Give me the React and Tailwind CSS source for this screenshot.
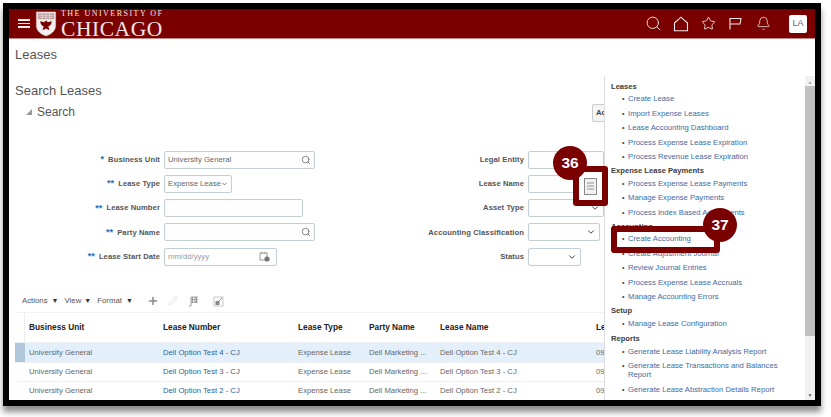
import { Search, Star, Bell, ChevronDown, Plus, Pencil } from "lucide-react";

const sans = "font-['Liberation_Sans',Arial,sans-serif]";

const Shield = () => (
  <svg width="22" height="26" viewBox="0 0 22 27" className="shrink-0">
    <path d="M1 1h20v14c0 6-5 9-10 11C6 24 1 21 1 15z" fill="#f4eeee" stroke="#d9c4c4" strokeWidth="0.6" />
    <rect x="2.5" y="2.5" width="17" height="6" fill="#b99a9a" />
    <path d="M3 4.5h16M3 6.5h16M7 2.5v6M11 2.5v6M15 2.5v6" stroke="#f4eeee" strokeWidth="0.6" />
    <path d="M11 10c-1 0-1.6.8-1.6 1.7L5 10.6c.3 3 1.6 4.8 3.6 5.4l-1.2 4 3.6-1.8 3.6 1.8-1.2-4c2-.6 3.3-2.4 3.6-5.4l-4.4 1.1C12.6 10.8 12 10 11 10z" fill="#7a0000" />
  </svg>
);

const HomeIcon = () => (
  <svg width="16" height="16" viewBox="0 0 16 16" fill="none" stroke="#f3e9e9" strokeWidth="1.1">
    <path d="M1.5 7 8 1.2 14.5 7v7.8h-13z" />
  </svg>
);

const FlagIcon = () => (
  <svg width="15" height="15" viewBox="0 0 15 15" fill="none" stroke="#f3e9e9" strokeWidth="1.1">
    <path d="M2 13.5V2.5h11L12 8H2" />
  </svg>
);

const Header = () => (
  <div className="h-[30px] shrink-0 bg-[#7a0000] border-b border-[#c98a8a] flex items-center pl-[9px] pr-[8px]">
    <div className="flex flex-col gap-[2.4px] w-[12px] mr-[5px]">
      <div className="h-[1.2px] bg-[#eee]" />
      <div className="h-[1.2px] bg-[#eee]" />
      <div className="h-[1.2px] bg-[#eee]" />
    </div>
    <Shield />
    <div className="ml-[4px] flex flex-col text-[#f0e6e6] font-['Liberation_Serif',serif] leading-none">
      <span className="text-[8px] tracking-[1.47px] h-[9px]">THE UNIVERSITY OF</span>
      <span className="text-[21.5px] tracking-[0.55px] h-[18px]">CHICAGO</span>
    </div>
    <div className="ml-auto flex items-center text-[#f3e9e9]">
      <Search size={17} strokeWidth={1.3} className="mr-[11px]" />
      <div className="mr-[12px]"><HomeIcon /></div>
      <Star size={15} strokeWidth={1.4} className="mr-[12px]" />
      <div className="mr-[13px]"><FlagIcon /></div>
      <Bell size={15} strokeWidth={1.2} className="mr-[18px]" />
      <div className={`w-[18px] h-[18px] rounded-[2px] bg-white text-[#666] text-[9px] flex items-center justify-center ${sans}`}>LA</div>
    </div>
  </div>
);

const Label = ({ req, children }) => (
  <div className="flex items-center justify-end text-[7.6px] font-bold text-[#555] tracking-[0.1px]">
    {req && <span className="text-[#2a6cb0] mr-[4px] text-[9px] leading-none">{req}</span>}
    {children}
  </div>
);

const Field = ({ w, children }) => (
  <div className={`h-[18px] bg-white border border-[#c4ced7] rounded-[2px] flex items-center px-[3px] text-[7.7px] text-[#666] shadow-[inset_0_0_1px_#dde] ${w}`}>
    {children}
  </div>
);

const Mag = () => <Search size={10} strokeWidth={2.4} className="ml-auto text-[#888]" />;
const Chev = ({ cls = "ml-auto" }) => <ChevronDown size={10} strokeWidth={2.4} className={`${cls} text-[#444]`} />;

const FormLeft = () => (
  <div className="grid grid-cols-[145px_auto] gap-x-[4px] gap-y-[6.3px] items-center">
    <Label req="*">Business Unit</Label>
    <Field w="w-[151px]">University General<Mag /></Field>
    <Label req="**">Lease Type</Label>
    <Field w="w-[68px]">Expense Lease<Chev /></Field>
    <Label req="**">Lease Number</Label>
    <Field w="w-[139px]" />
    <Label req="**">Party Name</Label>
    <Field w="w-[151px]"><Mag /></Field>
    <Label req="**">Lease Start Date</Label>
    <Field w="w-[113px]">
      <span className="text-[#999]">mm/dd/yyyy</span>
      <svg width="11" height="11" viewBox="0 0 11 11" className="ml-auto mr-[3px]">
        <rect x="1" y="2" width="7" height="7" fill="none" stroke="#999" />
        <path d="M3 1v2M6 1v2" stroke="#999" />
        <circle cx="8" cy="8" r="2.6" fill="#777" />
      </svg>
    </Field>
  </div>
);

const FormRight = () => (
  <div className="grid grid-cols-[151px_auto] gap-x-[4px] gap-y-[6.3px] items-center ml-[58px]">
    <Label>Legal Entity</Label>
    <Field w="w-[76px]" />
    <Label>Lease Name</Label>
    <Field w="w-[50px]" />
    <Label>Asset Type</Label>
    <Field w="w-[76px]"><Chev /></Field>
    <Label>Accounting Classification</Label>
    <Field w="w-[72px]"><Chev /></Field>
    <Label>Status</Label>
    <Field w="w-[53px]"><Chev /></Field>
  </div>
);

const Toolbar = () => (
  <div className="flex items-center h-[14px] ml-[13px] text-[7.8px] text-[#555]">
    <span>Actions</span><span className="ml-[4px] mr-[6px] text-[7px] text-[#333]">▼</span>
    <span>View</span><span className="ml-[3px] mr-[6px] text-[7px] text-[#333]">▼</span>
    <span>Format</span><span className="ml-[4px] text-[7px] text-[#333]">▼</span>
    <Plus size={12} strokeWidth={3} className="ml-[14px] text-[#888]" />
    <Pencil size={10} strokeWidth={1.4} className="ml-[9px] text-[#d5d5d5]" />
    <svg width="11" height="11" viewBox="0 0 11 11" className="ml-[10px]" fill="none" stroke="#888">
      <path d="M3 1h7M3 3.5h7M3 6h7M4.5 1v6M7 1v6M8.5 1v6M3 1v9H1" strokeWidth="0.8" />
    </svg>
    <svg width="11" height="11" viewBox="0 0 11 11" className="ml-[14px]" fill="none">
      <rect x="1" y="1" width="9" height="9" stroke="#bbb" strokeWidth="0.8" />
      <rect x="2.5" y="5" width="4" height="4" fill="#888" />
      <path d="M6 5l3-3" stroke="#888" />
    </svg>
  </div>
);

const rows = [
  { num: "Dell Option Test 4 - CJ", sel: true },
  { num: "Dell Option Test 3 - CJ" },
  { num: "Dell Option Test 2 - CJ" },
];

const LeaseTable = () => (
  <div className="ml-[6px] text-[7.7px] text-[#666] whitespace-nowrap">
    <div className="flex items-center h-[30px] border-t border-[#f2f2f2] font-bold text-[8.3px] text-[#222]">
      <div className="w-[10px] h-full border-r border-[#eee]" />
      <div className="w-[134px] pl-[4px]">Business Unit</div>
      <div className="w-[135px] pl-[4px]">Lease Number</div>
      <div className="w-[71px] pl-[4px]">Lease Type</div>
      <div className="w-[71px] pl-[4px]">Party Name</div>
      <div className="w-[156px] pl-[4px]">Lease Name</div>
      <div className="w-[12px] overflow-hidden pl-[4px]">Le</div>
    </div>
    {rows.map((r) => (
      <div key={r.num} className={`flex items-center h-[19.4px] border-t border-[#edf0f2] ${r.sel ? "bg-[#e3f0fb]" : ""}`}>
        <div className={`w-[10px] h-full ${r.sel ? "bg-[#b0c7d9]" : ""}`} />
        <div className="w-[134px] pl-[4px]">University General</div>
        <div className="w-[135px] pl-[4px] text-[#2f5f97]">{r.num}</div>
        <div className="w-[71px] pl-[4px]">Expense Lease</div>
        <div className="w-[71px] pl-[4px]">Dell Marketing ...</div>
        <div className="w-[156px] pl-[4px]">{r.num}</div>
        <div className="w-[12px] overflow-hidden pl-[4px]">09</div>
      </div>
    ))}
  </div>
);

const MenuHead = ({ children, cls = "" }) => (
  <div className={`text-[7.6px] font-bold text-[#3c3c3c] h-[12px] leading-[12px] mb-[1.5px] ${cls}`}>{children}</div>
);

const MenuLink = ({ children, tall }) => (
  <div className={`flex text-[7.7px] leading-[9px] text-[#3f6a9f] pl-[11px] ${tall ? "h-[23.5px]" : "h-[14.5px]"}`}>
    <span className="w-[6px] text-[#444] text-[7px]">•</span>
    <span className="w-[160px]">{children}</span>
  </div>
);

const TaskMenu = () => (
  <div className="absolute right-0 top-[37px] bottom-0 w-[211px] bg-white border-l border-[#ddd] flex">
    <div className="flex-1 pl-[6px] pt-[4.5px] overflow-hidden whitespace-normal">
      <MenuHead>Leases</MenuHead>
      <MenuLink>Create Lease</MenuLink>
      <MenuLink>Import Expense Leases</MenuLink>
      <MenuLink>Lease Accounting Dashboard</MenuLink>
      <MenuLink>Process Expense Lease Expiration</MenuLink>
      <MenuLink>Process Revenue Lease Expiration</MenuLink>
      <MenuHead cls="mt-[-1.5px]">Expense Lease Payments</MenuHead>
      <MenuLink>Process Expense Lease Payments</MenuLink>
      <MenuLink>Manage Expense Payments</MenuLink>
      <MenuLink>Process Index Based Adjustments</MenuLink>
      <MenuHead cls="mt-[-1.5px]">Accounting</MenuHead>
      <MenuLink>Create Accounting</MenuLink>
      <MenuLink>Create Adjustment Journal</MenuLink>
      <MenuLink>Review Journal Entries</MenuLink>
      <MenuLink>Process Expense Lease Accruals</MenuLink>
      <MenuLink>Manage Accounting Errors</MenuLink>
      <MenuHead cls="mt-[-1.5px]">Setup</MenuHead>
      <MenuLink>Manage Lease Configuration</MenuLink>
      <MenuHead>Reports</MenuHead>
      <MenuLink>Generate Lease Liability Analysis Report</MenuLink>
      <MenuLink tall>Generate Lease Transactions and Balances Report</MenuLink>
      <MenuLink>Generate Lease Abstraction Details Report</MenuLink>
    </div>
    <div className="w-[10px] bg-[#f1f1f1] flex flex-col items-center text-[5px] text-[#666]">
      <span className="h-[10px] leading-[12px] text-[#aaa]">▲</span>
      <div className="w-full h-[250px] bg-[#c1c1c1]" />
      <span className="mt-auto h-[9px] leading-[9px]">▼</span>
    </div>
  </div>
);

const Badge = ({ children, cls }) => (
  <div className={`absolute w-[34px] h-[34px] rounded-full bg-[#7a0000] text-white text-[15.5px] font-bold flex items-center justify-center ${cls}`}>
    {children}
  </div>
);

const Callouts = () => (
  <>
    <div className="absolute left-[564px] top-[127px] w-[35px] h-[40px] border-[6px] border-[#7a0000] rounded-[3px] bg-white flex items-center justify-center">
      <svg width="13" height="17" viewBox="0 0 13 17" fill="#f1f1f1" stroke="#8a8a8a">
        <rect x="0.5" y="0.5" width="12" height="16" />
        <path d="M3 5h7M3 8h7M3 11h7" strokeWidth="0.9" />
      </svg>
    </div>
    <Badge cls="left-[544px] top-[107px]">36</Badge>
    <div className="absolute left-[602px] top-[187px] w-[109px] h-[27px] border-[6px] border-[#7a0000] rounded-[3px]" />
    <Badge cls="left-[694px] top-[169px]">37</Badge>
  </>
);

export default function App() {
  return (
    <div className={`w-[831px] h-[417px] bg-white overflow-hidden pl-[3px] pt-[3px] ${sans}`}>
      <div className="w-[818px] h-[403px] border-[6px] border-black bg-white flex flex-col shadow-[0_6px_6px_rgba(0,0,0,0.45)]">
        <Header />
        <div className="relative flex-1 overflow-hidden">
          <div className="pl-[6px] pt-[8px] text-[13px] text-[#555] leading-[16px]">Leases</div>
          <div className="pl-[6px] mt-[20px] text-[13px] text-[#555] leading-[16px]">Search Leases</div>
          <div className="pl-[17px] mt-[5px] h-[16px] flex items-center text-[12px] text-[#555]">
            <span className="w-0 h-0 border-l-[6px] border-l-transparent border-b-[6px] border-b-[#999] mr-[5px]" />
            Search
          </div>
          <div className="absolute left-[583px] top-[65px] w-[12px] h-[18px] overflow-hidden border-l border-y border-[#ccc] rounded-l-[2px] bg-[#f5f5f5] pl-[3px] text-[7.7px] font-bold text-[#444] leading-[16px]">Ac</div>
          <div className="flex items-start pl-[6px] mt-[30.5px] whitespace-nowrap">
            <FormLeft />
            <FormRight />
          </div>
          <div className="mt-[28.5px]"><Toolbar /></div>
          <div className="mt-[4px]"><LeaseTable /></div>
          <TaskMenu />
          <Callouts />
        </div>
      </div>
    </div>
  );
}
